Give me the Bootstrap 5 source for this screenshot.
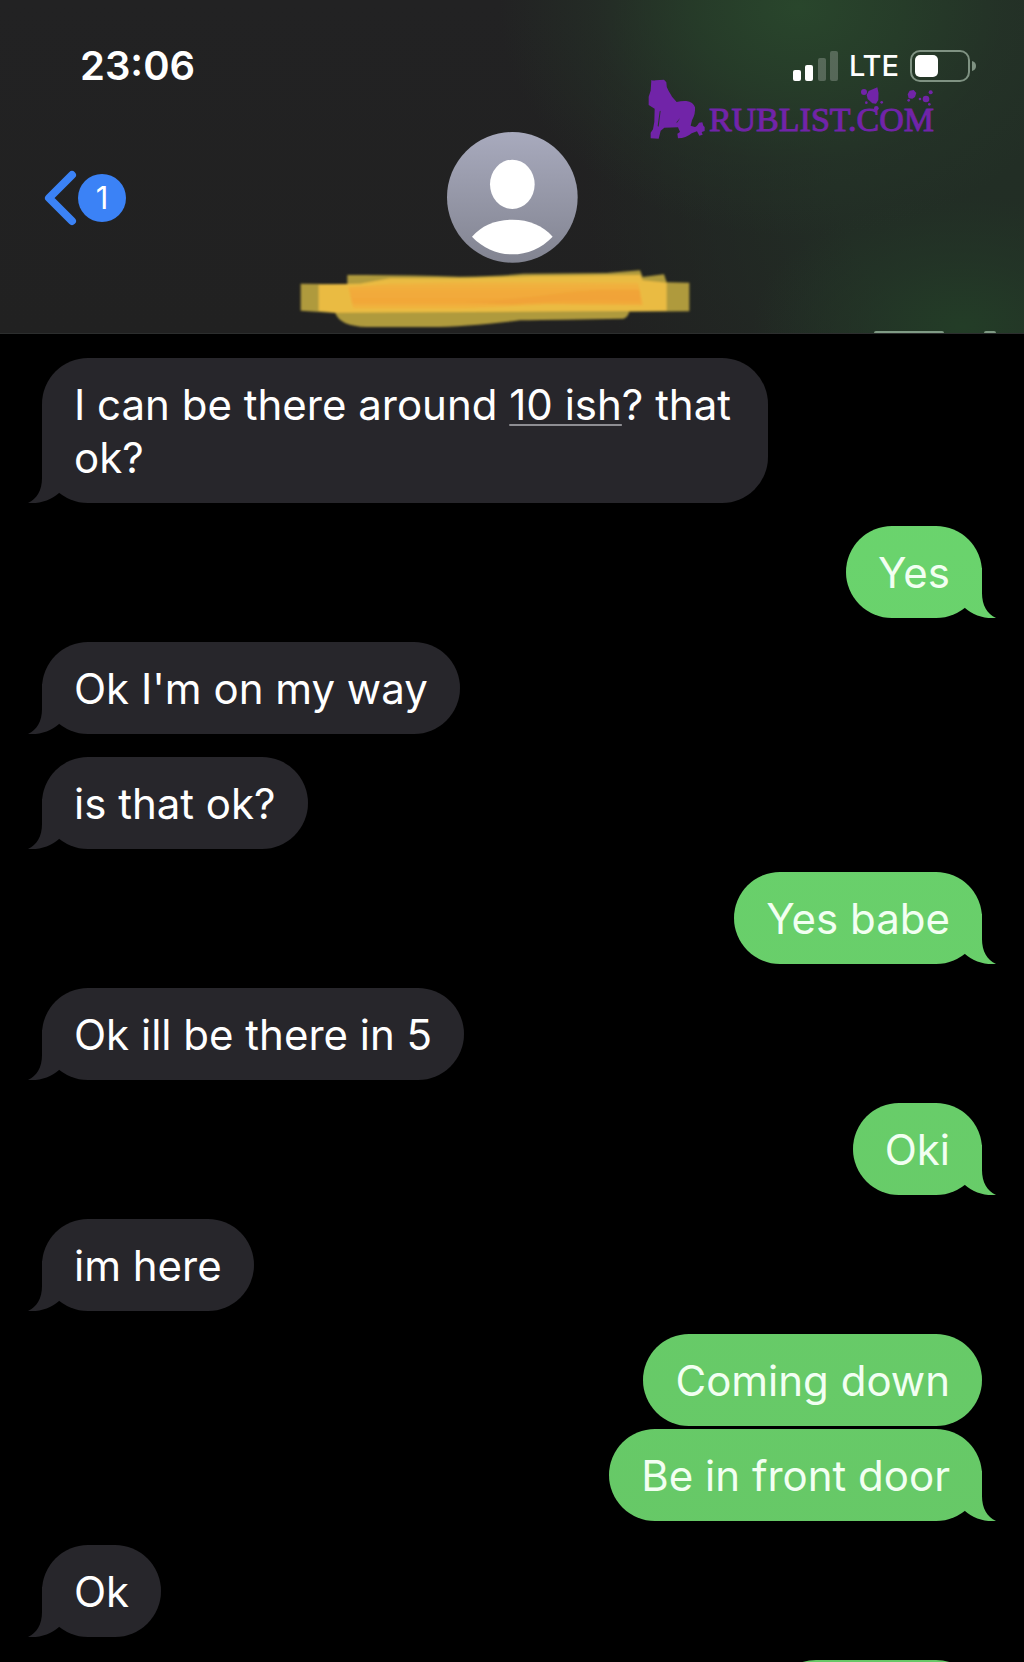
<!DOCTYPE html>
<html lang="en">
<head>
<meta charset="utf-8">
<meta name="viewport" content="width=device-width, initial-scale=1">
<title>Messages</title>
<link href="https://cdn.jsdelivr.net/npm/bootstrap@5.3.0/dist/css/bootstrap.min.css" rel="stylesheet">
<style>
  body { background: #000; color: #fff; font-family: Inter, "Liberation Sans", sans-serif; }
  .chat-header {
    background:
      radial-gradient(ellipse 300px 230px at 78% 2%, #29462c 0%, #27402acc 35%, #26382966 68%, #24302700 100%),
      radial-gradient(ellipse 210px 130px at 94% 98%, #233d27 0%, #23382799 50%, #23302600 100%),
      radial-gradient(ellipse 420px 420px at 98% 50%, #222e25 0%, #222d25 40%, #21212100 100%),
      linear-gradient(#222223, #212121);
    border-bottom: 1px solid #2c2e2e;
  }
  .status-bar { height: 132px; padding: 40px 47px 40px 80px; }
  .clock { font-size: 40px; font-weight: 600; line-height: 52px; }
  .carrier { font-size: 29px; font-weight: 500; line-height: 52px; padding: 0 10px; }
  .back-btn { color: #3b82f6; margin-left: 43px; }
  .unread { width: 48px; height: 48px; background: #3b82f6; color: #fff; font-size: 31px; line-height: 48px; }
  .scribble { width: 464px; height: 66px; }
  .site-mark { top: 79px; right: 90px; color: #7124a8; }
  .site-name { font-family: "Liberation Serif", serif; font-size: 34px; line-height: 40px; margin: 21px 0 0 3px; -webkit-text-stroke: 1px currentColor; }
  .site-drops { top: 8px; right: 0; }
  .peek { bottom: 0; height: 2px; border-radius: 2px 2px 0 0; background: #7f9a84; }
  .peek-wide { right: 80px; width: 70px; }
  .peek-dot { right: 28px; width: 12px; }
  .thread { padding: 24px 42px 0; }
  .bubble {
    position: relative; flex-shrink: 0; max-width: 726px; min-height: 92px; padding: 20px 32px 19px; border-radius: 46px;
    font-size: 42px; line-height: 53px;
  }
  .received { align-self: flex-start; background: #27262b; margin-bottom: 23px; }
  .sent {
    align-self: flex-end; color: #f2fff2; margin-bottom: 24px;
    background: linear-gradient(#6cd970, #66c766) fixed;
  }
  .stacked { margin-bottom: 3px; }
  .tail::after { content: ""; position: absolute; bottom: 0; width: 46px; height: 50px; background: inherit; }
  .received.tail::after { left: -14px; clip-path: path("M14 0V25C14 37 9 46 0 50C12 51 23 47 31 40V0Z"); }
  .sent.tail::after { right: -14px; clip-path: path("M32 0V25C32 37 37 46 46 50C34 51 23 47 15 40V0Z"); }
  .time-link { color: inherit; text-decoration: underline; text-decoration-color: #8e8e93; text-decoration-thickness: 2px; text-underline-offset: 4px; }
  .cut-off { width: 212px; }
</style>
</head>
<body class="vh-100 d-flex flex-column overflow-hidden">
<header class="chat-header position-relative flex-shrink-0">
  <div class="status-bar d-flex justify-content-between align-items-center">
    <div class="clock">23:06</div>
    <div class="d-flex align-items-center">
      <svg width="46" height="32" viewBox="0 0 46 32" fill="#fff" aria-label="Signal">
        <rect x="0" y="20" width="8" height="11" rx="2"/><rect x="12" y="15" width="8" height="16" rx="2"/>
        <g opacity=".22"><rect x="25" y="8" width="8" height="23" rx="2"/><rect x="37" y="1" width="8" height="30" rx="2"/></g>
      </svg>
      <span class="carrier">LTE</span>
      <svg width="68" height="32" viewBox="0 0 68 32" aria-label="Battery">
        <rect x="2" y="1" width="58" height="30" rx="9" fill="none" stroke="#7f9282" stroke-width="2"/>
        <rect x="6" y="5" width="23" height="22" rx="5" fill="#fff"/>
        <path d="M63 11Q67 12 67 16T63 21Z" fill="#7f9282"/>
      </svg>
    </div>
  </div>
  <div class="row g-0 align-items-center">
    <div class="col">
      <button type="button" class="back-btn btn border-0 p-0 d-flex align-items-center" aria-label="Back, 1 unread">
        <svg width="35" height="58" viewBox="0 0 35 58" fill="none" stroke="currentColor" stroke-width="8" stroke-linecap="round" stroke-linejoin="round"><path d="M29 6L6 29L29 52"/></svg>
        <span class="unread rounded-circle text-center">1</span>
      </button>
    </div>
    <div class="col-auto">
      <svg class="d-block" width="131" height="131" viewBox="0 0 393 393" role="img" aria-label="Contact">
        <defs><linearGradient id="av" x2="0" y2="1"><stop stop-color="#a8aabd"/><stop offset="1" stop-color="#828491"/></linearGradient></defs>
        <circle cx="196" cy="196" r="196" fill="url(#av)"/>
        <ellipse cx="196" cy="157" rx="67" ry="74" fill="#fff"/>
        <path d="M75 314C104 281 145 263 196 263S288 281 317 314C284 349 240 367 196 367S108 349 75 314Z" fill="#fff"/>
      </svg>
    </div>
    <div class="col"></div>
  </div>
  <div class="d-flex justify-content-center pt-1">
    <svg class="scribble" viewBox="0 440 1392 198" aria-hidden="true">
      <defs><filter id="soft" x="-5%" y="-10%" width="110%" height="120%"><feGaussianBlur stdDeviation="3"/></filter>
      <linearGradient id="ink" x2="0" y2="1"><stop stop-color="#efb641"/><stop offset=".3" stop-color="#f2ac3b"/><stop offset=".75" stop-color="#f2a739"/><stop offset="1" stop-color="#efb840"/></linearGradient></defs>
      <g filter="url(#soft)">
        <path d="M62 490L202 492V464Q380 463 540 469Q660 468 730 460L980 458L1080 450L1088 470L1152 462L1160 486L1228 487V573L1048 574Q1044 590 1030 595Q840 598 720 600Q560 620 450 620H260Q180 618 166 578L62 571Z" fill="#af9a3c"/>
        <path d="M116 493L240 490L330 474L560 474L760 467L1080 464L1088 480L1160 487V571L900 573L170 577L116 571Z" fill="#eabb42"/>
        <path d="M205 500L330 490L580 484L1075 487L1088 555L800 552L540 566L220 565Z" fill="url(#ink)"/>
        <path d="M560 545Q700 540 820 522T1080 510V540Q820 535 700 552Z" fill="#ef9e37" opacity=".5"/>
      </g>
    </svg>
  </div>
  <div class="site-mark position-absolute d-flex">
    <svg width="58" height="60" viewBox="34 148 174 180" fill="currentColor" aria-hidden="true">
      <path d="M44 151Q50 154 57 152L82 150L89 158Q88 171 96 184Q105 203 120 217Q134 213 149 214Q170 217 175 233Q177 252 166 272L162 288L174 292Q181 291 187 279L197 278L200 288L204 292L204 304L195 307L198 315L188 318L181 305L165 311Q148 326 124 326L122 312L130 307L124 293L83 294L72 303L66 327L42 326L42 309L49 299L53 276L54 237L36 226L36 201L42 183Z"/>
      <path d="M69 245L72 243L66 291L63 289ZM120 277L130 265L125 274L120 281Z" fill="#27382a"/>
    </svg>
    <span class="site-name">RUBLIST.COM</span>
    <svg class="site-drops position-absolute" width="74" height="24" viewBox="664 172 222 72" fill="currentColor" aria-hidden="true">
      <path d="M690 184L716 173Q722 190 719 211L712 222L701 221L687 208L684 196ZM813 183L825 181L833 190L829 202L821 207L810 206L807 194Z"/>
      <circle cx="676" cy="187" r="9"/><circle cx="713" cy="236" r="7"/><circle cx="683" cy="219" r="4"/><circle cx="729" cy="218" r="4"/><circle cx="862" cy="208" r="10"/><circle cx="876" cy="188" r="6"/><circle cx="844" cy="208" r="4"/><circle cx="810" cy="212" r="4"/><circle cx="872" cy="224" r="4"/>
    </svg>
  </div>
  <span class="peek peek-wide position-absolute"></span>
  <span class="peek peek-dot position-absolute"></span>
</header>
<main class="thread d-flex flex-column flex-grow-1 overflow-hidden">
  <div class="bubble received tail">I can be there around <a class="time-link" href="#">10 ish</a>? that ok?</div>
  <div class="bubble sent tail">Yes</div>
  <div class="bubble received tail">Ok I'm on my way</div>
  <div class="bubble received tail">is that ok?</div>
  <div class="bubble sent tail">Yes babe</div>
  <div class="bubble received tail">Ok ill be there in 5</div>
  <div class="bubble sent tail">Oki</div>
  <div class="bubble received tail">im here</div>
  <div class="bubble sent stacked">Coming down</div>
  <div class="bubble sent tail">Be in front door</div>
  <div class="bubble received tail">Ok</div>
  <div class="bubble sent cut-off"></div>
</main>
<script src="https://cdn.jsdelivr.net/npm/bootstrap@5.3.0/dist/js/bootstrap.bundle.min.js"></script>
</body>
</html>
